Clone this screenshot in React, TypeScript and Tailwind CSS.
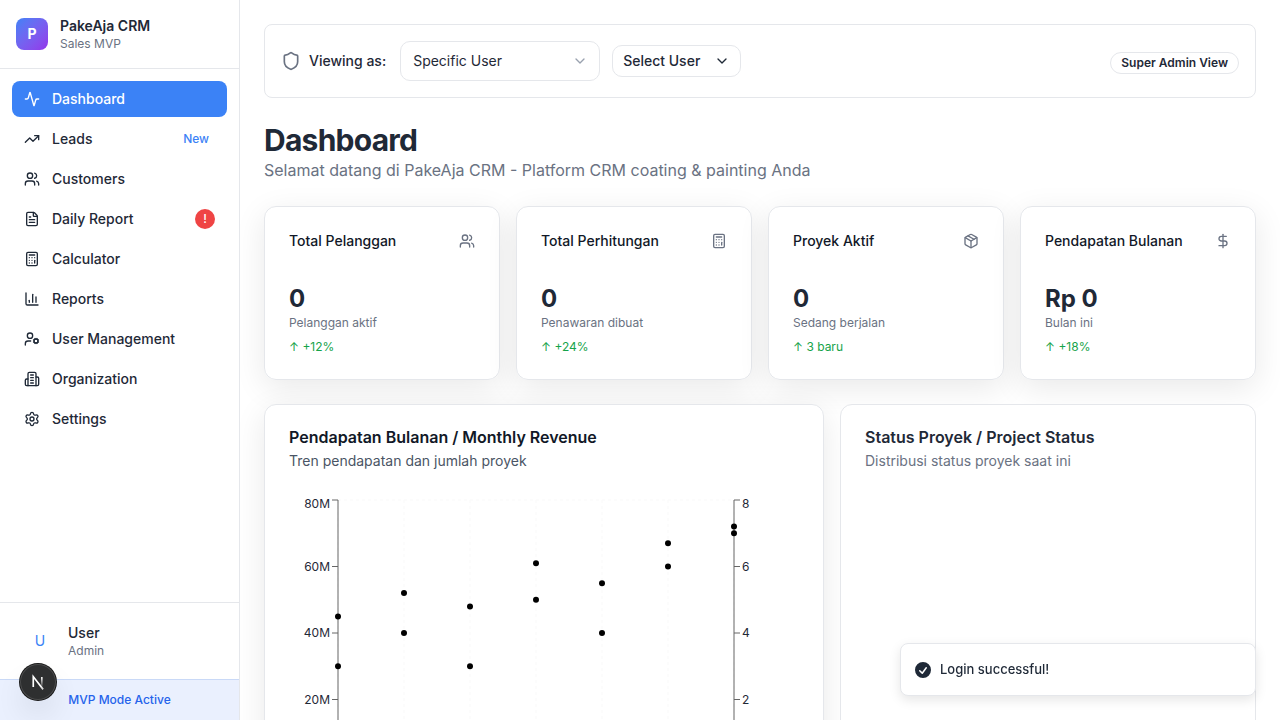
import type { ReactNode } from 'react';
import {
  Activity,
  Calculator,
  ChartColumn,
  ChevronDown,
  DollarSign,
  FileText,
  Package,
  Settings,
  Shield,
  TrendingUp,
  UserCog,
  Users,
} from 'lucide-react';

type IconType = (props: { className?: string }) => ReactNode;
type NavItem = { label: string; icon: unknown; badge?: 'new' | 'alert' };

function OfficeBuilding({ className }: { className?: string }) {
  return (
    <svg
      viewBox="0 0 24 24"
      fill="none"
      stroke="currentColor"
      strokeWidth="2"
      strokeLinecap="round"
      strokeLinejoin="round"
      aria-hidden="true"
      className={className}
    >
      <path d="M6 22V4a2 2 0 0 1 2-2h8a2 2 0 0 1 2 2v18Z" />
      <path d="M6 12H4a2 2 0 0 0-2 2v6a2 2 0 0 0 2 2h2" />
      <path d="M18 9h2a2 2 0 0 1 2 2v9a2 2 0 0 1-2 2h-2" />
      <path d="M10 6h4M10 10h4M10 14h4M10 18h4" />
    </svg>
  );
}

const NAV: NavItem[] = [
  { label: 'Dashboard', icon: Activity },
  { label: 'Leads', icon: TrendingUp, badge: 'new' },
  { label: 'Customers', icon: Users },
  { label: 'Daily Report', icon: FileText, badge: 'alert' },
  { label: 'Calculator', icon: Calculator },
  { label: 'Reports', icon: ChartColumn },
  { label: 'User Management', icon: UserCog },
  { label: 'Organization', icon: OfficeBuilding },
  { label: 'Settings', icon: Settings },
];

const STATS = [
  { title: 'Total Pelanggan', icon: Users, value: '0', note: 'Pelanggan aktif', trend: '↑ +12%' },
  { title: 'Total Perhitungan', icon: Calculator, value: '0', note: 'Penawaran dibuat', trend: '↑ +24%' },
  { title: 'Proyek Aktif', icon: Package, value: '0', note: 'Sedang berjalan', trend: '↑ 3 baru' },
  { title: 'Pendapatan Bulanan', icon: DollarSign, value: 'Rp 0', note: 'Bulan ini', trend: '↑ +18%' },
];

const REVENUE = [45, 52, 48, 61, 55, 67, 72];
const PROJECTS = [3, 4, 3, 5, 4, 6, 7];

function Sidebar() {
  return (
    <aside className="flex w-60 shrink-0 flex-col border-r border-gray-200 bg-white">
      <div className="flex items-center gap-3 border-b border-gray-200 p-4">
        <div className="flex size-8 items-center justify-center rounded-lg bg-linear-to-br from-[#3b82f6] to-[#9333ea] text-sm font-bold text-white">
          P
        </div>
        <div>
          <p className="text-sm font-semibold">PakeAja CRM</p>
          <p className="text-xs text-gray-500">Sales MVP</p>
        </div>
      </div>
      <nav className="flex flex-1 flex-col gap-1 p-3">
        {NAV.map(({ label, icon, badge }, i) => {
          const Icon = icon as IconType;
          return (
            <a
              key={label}
              href={`#${label.toLowerCase().replace(' ', '-')}`}
              className={
                i === 0
                  ? 'flex items-center gap-3 rounded-lg bg-[#3b82f6] px-3 py-2 text-sm font-medium text-white'
                  : 'flex items-center gap-3 rounded-lg px-3 py-2 text-sm font-medium'
              }
            >
              <Icon className="size-4" />
              <span className="flex-1">{label}</span>
              {badge === 'new' && <span className="px-1.5 text-xs text-[#3b82f6]">New</span>}
              {badge === 'alert' && (
                <span className="flex size-5 items-center justify-center rounded-full bg-[#ef4444] text-xs text-white">!</span>
              )}
            </a>
          );
        })}
      </nav>
      <div className="border-t border-gray-200 p-3">
        <button type="button" className="flex w-full items-center gap-3 px-3 py-2 text-left">
          <span className="flex size-8 items-center justify-center text-sm text-[#3b82f6]">U</span>
          <span>
            <span className="block text-sm font-medium">User</span>
            <span className="block text-xs text-gray-500">Admin</span>
          </span>
        </button>
      </div>
      <div className="border-t border-[#c9d9f7] bg-[#eaf0fe] p-3 text-center text-xs font-medium text-[#2563eb]">
        MVP Mode Active
      </div>
    </aside>
  );
}

function ViewBar() {
  return (
    <section className="flex items-center justify-between rounded-lg border border-gray-200 bg-white p-4">
      <div className="flex items-center gap-3">
        <label htmlFor="view-as" className="mr-0.5 flex items-center gap-2 text-sm font-medium">
          <Shield className="size-5 text-gray-500" />
          Viewing as:
        </label>
        <div className="relative">
          <select
            id="view-as"
            className="h-10 w-[200px] appearance-none rounded-[10px] border border-gray-200 bg-white px-3 text-sm"
          >
            <option>Specific User</option>
            <option>Super Admin</option>
          </select>
          <ChevronDown className="pointer-events-none absolute top-3 right-3 size-4 text-gray-400" />
        </div>
        <button type="button" className="flex h-8 items-center gap-3.5 rounded-[10px] border border-gray-200 bg-white px-2.5 text-sm font-medium">
          Select User
          <ChevronDown className="size-4" />
        </button>
      </div>
      <div>
        <span className="inline-flex items-center rounded-full border border-gray-200 px-2.5 py-0.5 text-xs font-semibold">
          Super Admin View
        </span>
      </div>
    </section>
  );
}

function Card({ children }: { children: ReactNode }) {
  return (
    <section className="rounded-xl border border-gray-200 bg-white/95 p-6 shadow-[0_8px_32px_rgba(0,0,0,0.09)]">
      {children}
    </section>
  );
}

function RevenueChart() {
  const left = 49;
  const right = 445;
  const top = 5;
  const height = 266;
  const xs = REVENUE.map((_, i) => left + i * 66);
  const yOf = (share: number) => top + height * (1 - share);
  const ticks = [1, 2, 3, 4];
  const labelY = (t: number) => (t === 4 ? 13 : Math.round(yOf(t / 4)) + 4);
  return (
    <svg viewBox="0 0 510 300" className="w-full text-xs" role="img" aria-label="Monthly revenue">
      <g stroke="#f9f9f9" strokeDasharray="3 3">
        {xs.map((x) => (
          <line key={x} x1={x} x2={x} y1={top} y2={top + height} />
        ))}
        <line x1={left} x2={right} y1={top} y2={top} />
      </g>
      <g stroke="#666666">
        <line x1={left} x2={left} y1={top} y2={top + height} />
        <line x1={right} x2={right} y1={top} y2={top + height} />
        {ticks.map((t) => (
          <g key={t}>
            <line x1={left - 6} x2={left} y1={yOf(t / 4)} y2={yOf(t / 4)} />
            <line x1={right} x2={right + 6} y1={yOf(t / 4)} y2={yOf(t / 4)} />
          </g>
        ))}
      </g>
      <g fill="#1f2937">
        {ticks.map((t) => (
          <g key={t}>
            <text x={left - 8} y={labelY(t)} textAnchor="end">
              {`${t * 20}M`}
            </text>
            <text x={right + 8} y={labelY(t)}>
              {t * 2}
            </text>
          </g>
        ))}
      </g>
      {xs.map((x, i) => (
        <g key={x}>
          <circle cx={x} cy={yOf(REVENUE[i] / 80)} r="3" />
          <circle cx={x} cy={yOf(PROJECTS[i] / 8)} r="3" />
        </g>
      ))}
    </svg>
  );
}

function Toast() {
  return (
    <div
      role="status"
      className="fixed right-6 bottom-6 flex w-[356px] items-center gap-[7px] rounded-lg border border-gray-200 bg-white py-4 pr-4 pl-3 shadow-[0_4px_12px_rgba(0,0,0,0.1)]"
    >
      <svg viewBox="0 0 20 20" fill="currentColor" className="-my-1 size-5">
        <path
          fillRule="evenodd"
          clipRule="evenodd"
          d="M10 18a8 8 0 100-16 8 8 0 000 16zm3.857-9.809a.75.75 0 00-1.214-.882l-3.483 4.79-1.88-1.88a.75.75 0 10-1.06 1.061l2.5 2.5a.75.75 0 001.137-.089l4-5.5z"
        />
      </svg>
      <span className="text-[13px] leading-[19px] font-medium">Login successful!</span>
    </div>
  );
}

function DevBadge() {
  return (
    <button
      type="button"
      aria-label="Open developer tools"
      className="fixed bottom-5 left-5 size-9 rounded-full bg-[#2e2f30] shadow-[0_0_0_1px_#171717,inset_0_0_0_1px_rgba(255,255,255,0.14),0_16px_32px_-8px_rgba(0,0,0,0.24)]"
    >
      <svg viewBox="0 0 40 40" fill="none" className="size-9">
        <defs>
          <linearGradient id="slant" x1="9.95" y1="11.13" x2="15.25" y2="17.7" gradientUnits="userSpaceOnUse">
            <stop stopColor="white" />
            <stop offset="0.6" stopColor="white" stopOpacity="0.77" />
            <stop offset="1" stopColor="white" stopOpacity="0" />
          </linearGradient>
          <linearGradient id="stem" x1="11.82" y1="1.5" x2="11.79" y2="13.1" gradientUnits="userSpaceOnUse">
            <stop stopColor="white" />
            <stop offset="1" stopColor="white" stopOpacity="0" />
          </linearGradient>
        </defs>
        <g transform="translate(12.4 13)" strokeWidth="1.86">
          <path d="M13.3 15.2 L2.34 1 V12.6" stroke="url(#slant)" />
          <rect x="10.9" y="1.5" width="1.86" height="11.6" fill="url(#stem)" />
        </g>
      </svg>
    </button>
  );
}

export default function App() {
  return (
    <div className="flex h-screen overflow-hidden bg-white font-['Inter',sans-serif] text-[#1f2937]">
      <Sidebar />
      <main className="flex min-w-0 flex-1 flex-col gap-6 overflow-y-auto p-6 [scrollbar-width:none]">
        <ViewBar />
        <header>
          <h1 className="text-3xl font-bold tracking-tight">Dashboard</h1>
          <p className="text-gray-500">Selamat datang di PakeAja CRM - Platform CRM coating &amp; painting Anda</p>
        </header>
        <div className="grid grid-cols-4 gap-4">
          {STATS.map(({ title, icon: Icon, value, note, trend }) => (
            <Card key={title}>
              <div className="flex items-center justify-between">
                <h2 className="text-sm font-medium text-[#111827]">{title}</h2>
                <Icon className="size-4 text-gray-500" />
              </div>
              <p className="mt-8 text-2xl font-bold">{value}</p>
              <p className="text-xs text-gray-500">{note}</p>
              <p className="mt-2 text-xs text-[#16a34a]">{trend}</p>
            </Card>
          ))}
        </div>
        <div className="grid grid-cols-7 gap-4">
          <div className="col-span-4 grid">
            <Card>
              <h2 className="leading-none font-semibold text-[#111827]">Pendapatan Bulanan / Monthly Revenue</h2>
              <p className="mt-1.5 mb-6 text-sm text-gray-600">Tren pendapatan dan jumlah proyek</p>
              <RevenueChart />
            </Card>
          </div>
          <div className="col-span-3 grid">
            <section className="rounded-xl border border-gray-200 bg-white/95 p-6">
              <h2 className="leading-none font-semibold">Status Proyek / Project Status</h2>
              <p className="mt-1.5 text-sm text-gray-500">Distribusi status proyek saat ini</p>
            </section>
          </div>
        </div>
      </main>
      <Toast />
      <DevBadge />
    </div>
  );
}
